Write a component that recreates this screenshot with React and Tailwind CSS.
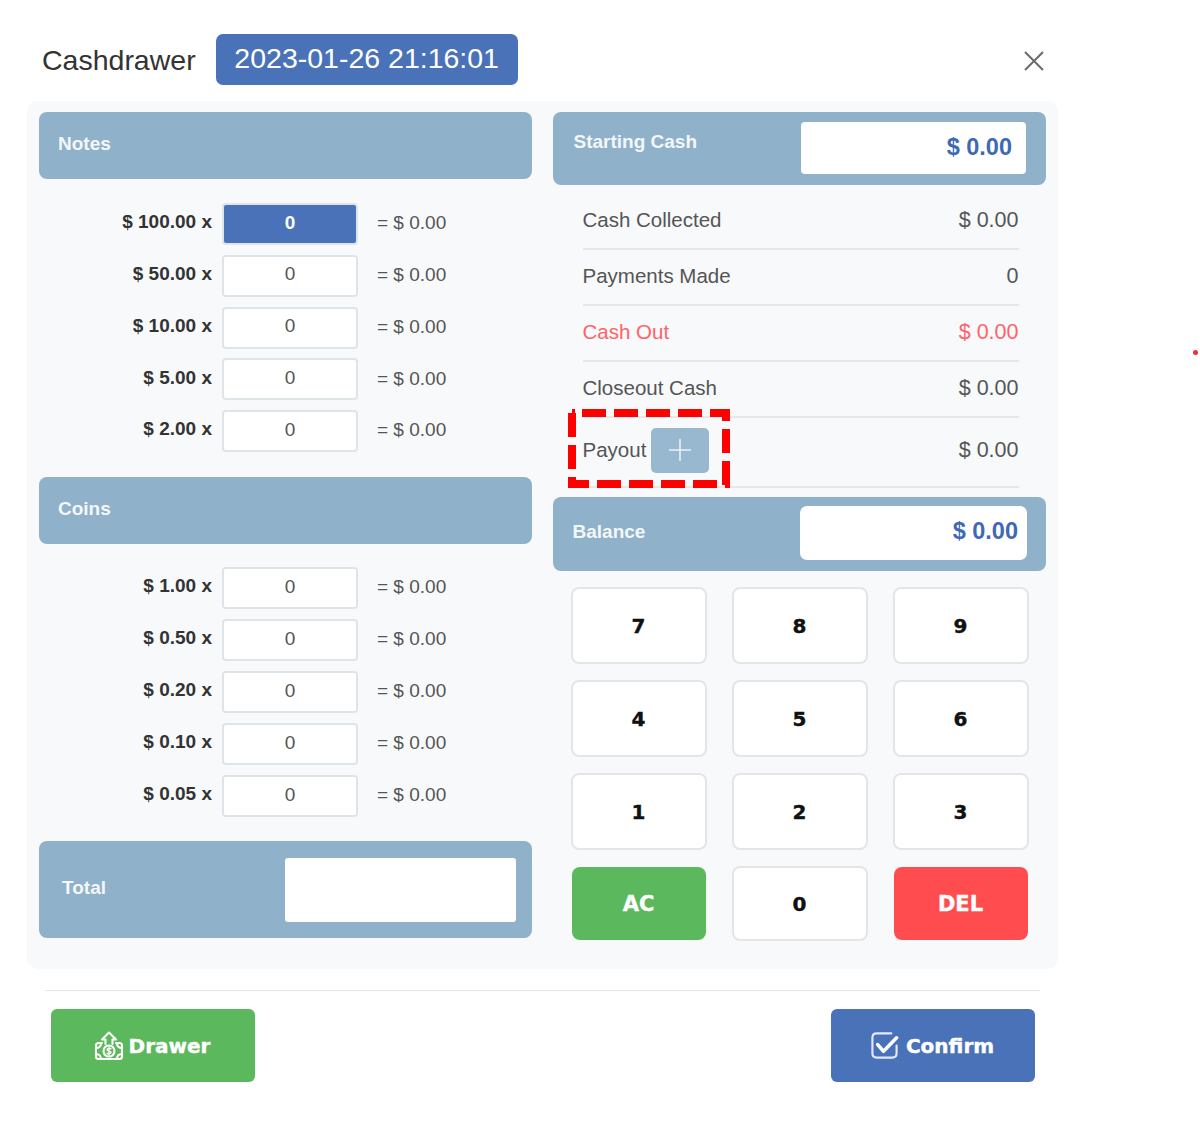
import React from "react";

const notes = ["$ 100.00 x", "$ 50.00 x", "$ 10.00 x", "$ 5.00 x", "$ 2.00 x"];
const coins = ["$ 1.00 x", "$ 0.50 x", "$ 0.20 x", "$ 0.10 x", "$ 0.05 x"];

function DenomRow({ label, active }) {
  return (
    <div className="flex items-center h-[42px]">
      <span className="w-[173px] text-right text-[19px] font-bold text-[#333] pb-[3px]">{label}</span>
      <input
        readOnly
        value="0"
        className={
          active
            ? "ml-[10px] w-[136px] h-[42px] rounded-[4px] border-2 border-[#dfe3ea] bg-[#4a72b8] text-center text-[19px] font-bold text-white pb-[3px] outline-none"
            : "ml-[10px] w-[136px] h-[42px] rounded-[4px] border-2 border-[#dfe3ea] bg-white text-center text-[19px] text-[#555] pb-[3px] outline-none"
        }
      />
      <span className="ml-[19px] text-[19px] text-[#555] pb-[1px]">= $ 0.00</span>
    </div>
  );
}

function SectionHeader({ title }) {
  return (
    <div className="h-[67px] rounded-[8px] bg-[#8fb1c9] flex items-center pl-[19px] pb-[2px] text-[19px] font-bold text-[#f4f7fa]">
      {title}
    </div>
  );
}

function SummaryRow({ label, value, red }) {
  return (
    <div
      className={
        red
          ? "h-[56px] pb-[2px] border-b-2 border-[#e6e8ec] flex items-center justify-between text-[20.5px] text-[#ff6368]"
          : "h-[56px] pb-[2px] border-b-2 border-[#e6e8ec] flex items-center justify-between text-[20.5px] text-[#555]"
      }
    >
      <span>{label}</span>
      <span className="text-[21.5px]">{value}</span>
    </div>
  );
}

function Key({ children, kind }) {
  const base =
    "flex items-center justify-center rounded-[8px] font-['DejaVu_Sans',sans-serif] font-bold [-webkit-text-stroke:0.4px] ";
  if (kind === "green")
    return <button className={base + "mx-[1px] my-[1px] pt-[2px] bg-[#5cb85c] text-white text-[21px]"}>{children}</button>;
  if (kind === "red")
    return <button className={base + "mx-[1px] my-[1px] pt-[2px] bg-[#ff4d4f] text-white text-[21px]"}>{children}</button>;
  return <button className={base + "border-2 border-[#e3e5e8] bg-white text-[#111] text-[20px] pt-[1px]"}>{children}</button>;
}

function DrawerIcon() {
  return (
    <svg viewBox="0 0 30 30" className="w-[30px] h-[30px]" fill="none" stroke="white" strokeWidth="2.1" strokeLinejoin="round" strokeLinecap="round">
      <path d="M15 1.5 L22 8.5 H18.5 V13 M15 1.5 L8 8.5 H11.5 V13" />
      <path d="M8 12 H4.5 C3 12 2 13 2 14.5 V25.5 C2 27 3 28 4.5 28 H25.5 C27 28 28 27 28 25.5 V14.5 C28 13 27 12 25.5 12 H22" />
      <circle cx="15" cy="20" r="5.5" />
      <path d="M17 17.8 C16 17 13 17 13 18.8 C13 20.6 17 19.6 17 21.3 C17 23 14 23 13 22.2 M15 16 V24" strokeWidth="1.3" />
      <path d="M2 17 C5 17 7 15 7 12.5 M28 17 C25 17 23 15 23 12.5 M2 23 C5 23 7 25 7 28 M28 23 C25 23 23 25 23 28" />
    </svg>
  );
}

function ConfirmIcon() {
  return (
    <svg viewBox="0 0 30 30" className="w-[29px] h-[29px]" fill="none" stroke="white" strokeLinecap="round" strokeLinejoin="round">
      <path d="M22 2.5 H7 C4 2.5 2.5 4 2.5 7 V23 C2.5 26 4 27.5 7 27.5 H23 C26 27.5 27.5 26 27.5 23 V15" strokeWidth="2.2" opacity="0.85" />
      <path d="M8 14 L14 21 L27.5 7" strokeWidth="3.6" />
    </svg>
  );
}

export default function App() {
  return (
    <div className="relative w-[1200px] h-[1121px] overflow-hidden bg-white font-['Liberation_Sans',Arial,sans-serif]">
      <div className="pt-[34px]">
        <div className="flex items-center h-[51px] pl-[42px] w-[1044px]">
          <span className="text-[28.5px] text-[#333] leading-none pt-[1px]">Cashdrawer</span>
          <span className="ml-[20px] w-[302px] h-[51px] rounded-[7px] bg-[#4a72b8] text-white text-[28.5px] flex items-center justify-center pb-[3px]">
            2023-01-26 21:16:01
          </span>
          <svg viewBox="0 0 20 20" className="ml-auto w-[20px] h-[20px] mt-[2px]" stroke="#6b6b6b" strokeWidth="2" fill="none">
            <path d="M1 1 L19 19 M19 1 L1 19" />
          </svg>
        </div>

        <div className="mt-[16px] ml-[27px] w-[1031px] h-[868px] rounded-[10px] bg-[#f8f9fb] flex gap-[21px] px-[12px] pt-[11px]">
          <div className="w-[493px]">
            <SectionHeader title="Notes" />
            <div className="mt-[24px] flex flex-col gap-[9.75px]">
              {notes.map((n, i) => (
                <DenomRow key={n} label={n} active={i === 0} />
              ))}
            </div>
            <div className="mt-[25px]">
              <SectionHeader title="Coins" />
            </div>
            <div className="mt-[23px] flex flex-col gap-[10px]">
              {coins.map((n) => (
                <DenomRow key={n} label={n} />
              ))}
            </div>
            <div className="mt-[24px] h-[97px] rounded-[8px] bg-[#8fb1c9] flex items-center justify-between pl-[23px] pr-[16px] text-[19px] font-bold text-[#f4f7fa]">
              <span className="pb-[2px]">Total</span>
              <div className="w-[231px] h-[64px] rounded-[3px] bg-white" />
            </div>
          </div>

          <div className="w-[494px]">
            <div className="h-[73px] rounded-[8px] bg-[#8fb1c9] flex items-center justify-between pl-[21px] pr-[20px]">
              <span className="text-[19px] font-bold text-[#f4f7fa] pb-[12px]">Starting Cash</span>
              <div className="w-[225px] h-[52px] mb-[2px] rounded-[4px] bg-white flex items-center justify-end pr-[14px] text-[23.5px] font-bold text-[#3f69b5]">
                $ 0.00
              </div>
            </div>

            <div className="mt-[9px] ml-[30px] w-[436px]">
              <SummaryRow label="Cash Collected" value="$ 0.00" />
              <SummaryRow label="Payments Made" value="0" />
              <SummaryRow label="Cash Out" value="$ 0.00" red />
              <SummaryRow label="Closeout Cash" value="$ 0.00" />
              <div className="relative h-[70px] pb-[4px] border-b-2 border-[#e6e8ec] flex items-center justify-between text-[20.5px] text-[#555]">
                <div className="flex items-center">
                  <span>Payout</span>
                  <button className="ml-[5px] w-[58px] h-[45px] rounded-[5px] bg-[#98b8cf] flex items-center justify-center">
                    <svg viewBox="0 0 22 22" className="w-[22px] h-[22px]" stroke="#eaf1f6" strokeWidth="1.6">
                      <path d="M11 0 V22 M0 11 H22" />
                    </svg>
                  </button>
                </div>
                <span className="text-[21.5px]">$ 0.00</span>
                <svg viewBox="0 0 162 79" className="absolute left-[-15px] top-[-9px] w-[162px] h-[79px]" fill="none" stroke="#ff0000" strokeWidth="8">
                  <line x1="14" y1="4" x2="162" y2="4" strokeDasharray="24 8" />
                  <line x1="4" y1="4" x2="4" y2="79" strokeDasharray="24 8" />
                  <line x1="158" y1="0" x2="158" y2="79" strokeDasharray="24 8" strokeDashoffset="12" />
                  <line x1="0" y1="75" x2="162" y2="75" strokeDasharray="24 8" strokeDashoffset="3" />
                  <rect x="4" y="0" width="3" height="4" fill="#ff0000" stroke="none" />
                </svg>
              </div>
            </div>

            <div className="mt-[9px] h-[74px] rounded-[8px] bg-[#8fb1c9] flex items-center justify-between pl-[20px] pr-[19px]">
              <span className="text-[19px] font-bold text-[#f4f7fa] pb-[4px]">Balance</span>
              <div className="w-[227px] h-[54px] mb-[2px] rounded-[7px] bg-white flex items-center justify-end pr-[9px] text-[23.5px] font-bold text-[#3f69b5] pb-[3px]">
                $ 0.00
              </div>
            </div>

            <div className="mt-[16px] ml-[18px] w-[458px] grid grid-cols-3 gap-x-[25px] gap-y-[16px] grid-rows-[77px_77px_77px_75px]">
              <Key>7</Key>
              <Key>8</Key>
              <Key>9</Key>
              <Key>4</Key>
              <Key>5</Key>
              <Key>6</Key>
              <Key>1</Key>
              <Key>2</Key>
              <Key>3</Key>
              <Key kind="green">AC</Key>
              <Key>0</Key>
              <Key kind="red">DEL</Key>
            </div>
          </div>
        </div>

        <div className="mt-[21px] ml-[45px] w-[995px] h-[1px] bg-[#e2e6ec]" />

        <div className="mt-[18px] ml-[51px] w-[984px] flex justify-between">
          <button className="w-[204px] h-[73px] pr-[2px] rounded-[6px] bg-[#5cb85c] flex items-center justify-center gap-[5px] text-white text-[20px] font-bold font-['DejaVu_Sans',sans-serif] [-webkit-text-stroke:0.4px]">
            <DrawerIcon />
            <span>Drawer</span>
          </button>
          <button className="w-[204px] h-[73px] pr-[2px] rounded-[6px] bg-[#4a72b8] flex items-center justify-center gap-[7px] text-white text-[20px] font-bold font-['DejaVu_Sans',sans-serif] [-webkit-text-stroke:0.4px]">
            <ConfirmIcon />
            <span>Confirm</span>
          </button>
        </div>
      </div>

      <div className="absolute left-[1193px] top-[350px] w-[5px] h-[5px] rounded-full bg-[#f03030]" />
    </div>
  );
}
